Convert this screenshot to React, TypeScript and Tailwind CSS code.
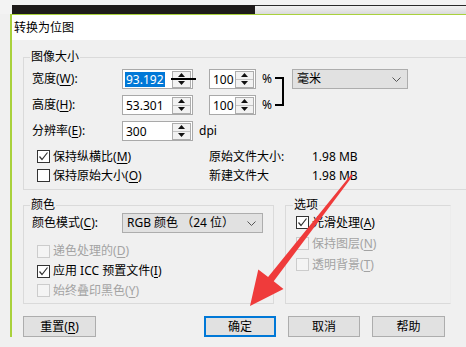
import React from "react";

const FONT = "font-['Noto_Sans','Noto_Sans_CJK_SC',sans-serif]";

function U({ c }: { c: string }) {
  return <span className="underline underline-offset-[2px] decoration-[1px]">{c}</span>;
}

function Spin({ active }: { active?: boolean }) {
  return (
    <div className="flex flex-col w-[19px] h-[17px] border border-[#adadad] bg-[#f2f2f2] shrink-0">
      <div className="flex-1 flex items-center justify-center">
        <svg width="7" height="4" viewBox="0 0 7 4">
          <polygon points="0,4 7,4 3.5,0" fill="#111" />
        </svg>
      </div>
      <div className={active ? "h-[2px] bg-black -mx-[2px] mr-[-6px]" : "h-px bg-[#c4c4c4]"} />
      <div className="flex-1 flex items-center justify-center">
        <svg width="7" height="4" viewBox="0 0 7 4">
          <polygon points="0,0 7,0 3.5,4" fill="#111" />
        </svg>
      </div>
    </div>
  );
}

function NumBox({ value, width, selected, active }: { value: string; width: string; selected?: boolean; active?: boolean }) {
  return (
    <div className={`${width} h-[20px] border border-[#a9a9a9] bg-white flex items-center justify-between pl-[2px] pr-px shrink-0`}>
      <span className={`text-[12px] leading-[15px] px-px ${selected ? "bg-[#0078d7] text-white" : "text-black"}`}>{value}</span>
      <Spin active={active} />
    </div>
  );
}

function Chevron() {
  return (
    <svg width="9" height="5" viewBox="0 0 9 5">
      <polyline points="0.5,0.5 4.5,4.5 8.5,0.5" fill="none" stroke="#555" strokeWidth="1" />
    </svg>
  );
}

function Cb({ checked, disabled }: { checked?: boolean; disabled?: boolean }) {
  return (
    <span
      className={`w-[13px] h-[13px] border shrink-0 flex items-center justify-center ${
        disabled ? "border-[#cccccc] bg-[#f4f4f4]" : "border-[#333333] bg-white"
      }`}
    >
      {checked && (
        <svg width="11" height="11" viewBox="0 0 11 11">
          <polyline points="1.5,5.5 4,8.5 9.5,1.5" fill="none" stroke="#333" strokeWidth="1.2" />
        </svg>
      )}
    </span>
  );
}

function CheckRow({
  label,
  m,
  checked,
  disabled,
  h,
}: {
  label: string;
  m: string;
  checked?: boolean;
  disabled?: boolean;
  h: string;
}) {
  return (
    <div className={`flex items-center gap-[3px] ${h} ${disabled ? "text-[#a3a3a3]" : "text-black"}`}>
      <Cb checked={checked} disabled={disabled} />
      <span className="text-[12px] leading-[14px] whitespace-nowrap">
        {label}(<U c={m} />)
      </span>
    </div>
  );
}

function Btn({ label, m, primary, width }: { label: string; m?: string; primary?: boolean; width: string }) {
  return (
    <div
      className={`${width} h-[21px] bg-[#e1e1e1] flex items-center justify-center text-[12px] leading-[14px] text-black ${
        primary ? "border-2 border-[#0078d7]" : "border border-[#adadad]"
      }`}
    >
      {label}
      {m && (
        <>
          (<U c={m} />)
        </>
      )}
    </div>
  );
}

export default function App() {
  return (
    <div className={`relative w-[466px] h-[347px] overflow-hidden bg-[#f0f0f0] ${FONT}`}>
      {/* top strip */}
      <div className="h-[14px] bg-[#f3f3f3] pt-[5px] flex">
        <div className="w-[12px]" />
        <div className="w-[243px] h-[9px] bg-[#1e1b1a]" />
        <div className="flex-1 h-[9px] border-t border-[#2a2a2a] bg-gradient-to-b from-[#f2f2f2] to-[#dadada]" />
      </div>

      {/* dialog */}
      <div className="ml-[10px] w-[480px] border-l-2 border-t border-[#a9d13c] bg-[#f0f0f0]">
        <div className="h-[25px] bg-white flex items-center pl-[2px] text-[12px] leading-[14px] text-black">
          转换为位图
        </div>

        <div className="pl-[11px] pt-[10px]">
          {/* 图像大小 */}
          <fieldset className="w-[460px] border border-[#dadada] pl-[8px] pb-[4px]">
            <legend className="ml-[-2px] px-px text-[12px] leading-[14px] text-black">图像大小</legend>
            <div className="flex mt-[5px]">
              <div className="flex flex-col gap-[6px]">
                <div className="flex items-center h-[20px]">
                  <div className="w-[90px] text-[12px] leading-[14px]">
                    宽度(<U c="W" />):
                  </div>
                  <NumBox value="93.192" width="w-[71px]" selected active />
                  <div className="ml-[16px]">
                    <NumBox value="100" width="w-[47px]" />
                  </div>
                  <span className="ml-[6px] w-[8px] text-[12px] leading-[14px]">%</span>
                </div>
                <div className="flex items-center h-[20px]">
                  <div className="w-[90px] text-[12px] leading-[14px]">
                    高度(<U c="H" />):
                  </div>
                  <NumBox value="53.301" width="w-[71px]" />
                  <div className="ml-[16px]">
                    <NumBox value="100" width="w-[47px]" />
                  </div>
                  <span className="ml-[6px] w-[8px] text-[12px] leading-[14px]">%</span>
                </div>
              </div>
              <div className="ml-[5px] mt-[8px] w-[9px] h-[29px] border-t-2 border-r-2 border-b-2 border-black" />
              <div className="ml-[8px] w-[116px] h-[20px] bg-[#e1e1e1] border border-[#adadad] flex items-center justify-between pl-[4px] pr-[6px]">
                <span className="text-[12px] leading-[14px]">毫米</span>
                <Chevron />
              </div>
            </div>
            <div className="flex items-center h-[20px] mt-[6px]">
              <div className="w-[90px] text-[12px] leading-[14px]">
                分辨率(<U c="E" />):
              </div>
              <NumBox value="300" width="w-[71px]" />
              <span className="ml-[6px] text-[12px] leading-[14px]">dpi</span>
            </div>
            <div className="mt-[6px] pl-[5px] grid grid-cols-[172px_103px_auto] text-[12px] leading-[14px]">
              <CheckRow label="保持纵横比" m="M" checked h="h-[19px]" />
              <div className="h-[19px] flex items-center">原始文件大小:</div>
              <div className="h-[19px] flex items-center">1.98 MB</div>
              <CheckRow label="保持原始大小" m="O" h="h-[19px]" />
              <div className="h-[19px] flex items-center">新建文件大</div>
              <div className="h-[19px] flex items-center">1.98 MB</div>
            </div>
          </fieldset>

          <div className="flex gap-[11px] mt-[8px]">
            {/* 颜色 */}
            <fieldset className="w-[251px] border border-[#dadada] pl-[8px] pb-[3px]">
              <legend className="ml-[-2px] px-px text-[12px] leading-[14px] text-black">颜色</legend>
              <div className="flex items-center h-[20px] mt-px">
                <div className="w-[90px] text-[12px] leading-[14px]">
                  颜色模式(<U c="C" />):
                </div>
                <div className="w-[141px] h-[20px] bg-[#e1e1e1] border border-[#adadad] flex items-center justify-between pl-[4px] pr-[6px]">
                  <span className="text-[12px] leading-[14px] whitespace-nowrap">RGB 颜色 （24 位）</span>
                  <Chevron />
                </div>
              </div>
              <div className="mt-[8px] pl-[5px]">
                <CheckRow label="递色处理的" m="D" disabled h="h-[20px]" />
                <CheckRow label="应用 ICC 预置文件" m="I" checked h="h-[20px]" />
                <CheckRow label="始终叠印黑色" m="Y" disabled h="h-[19px]" />
              </div>
            </fieldset>

            {/* 选项 */}
            <fieldset className="w-[166px] border border-[#dadada] border-r-[#ececec] pl-[10px]">
              <legend className="ml-[-3px] px-px text-[12px] leading-[14px] text-black">选项</legend>
              <CheckRow label="光滑处理" m="A" checked h="h-[21px]" />
              <CheckRow label="保持图层" m="N" disabled h="h-[21px]" />
              <CheckRow label="透明背景" m="T" disabled h="h-[21px]" />
            </fieldset>
          </div>

          <div className="flex mt-[12px]">
            <Btn label="重置" m="R" width="w-[73px]" />
            <div className="ml-[108px] flex gap-[12px]">
              <Btn label="确定" primary width="w-[72px]" />
              <Btn label="取消" width="w-[72px]" />
              <Btn label="帮助" width="w-[73px]" />
            </div>
          </div>
        </div>
      </div>

      {/* red arrow annotation */}
      <svg className="absolute left-0 top-0 pointer-events-none" width="466" height="347" viewBox="0 0 466 347">
        <polygon
          points="250,306 258.3,269.4 268.1,277.1 351.4,174.2 353,175.6 273.7,281.3 283.5,289"
          fill="#ef3b3b"
        />
      </svg>
    </div>
  );
}
